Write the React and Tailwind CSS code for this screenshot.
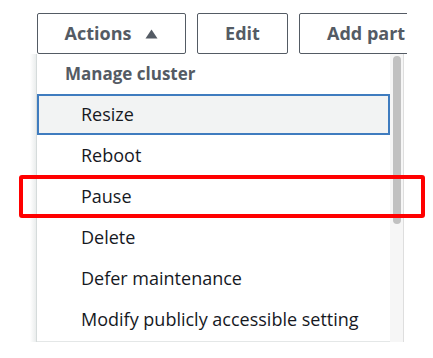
import React from "react";

const items = ["Reboot", "Pause", "Delete", "Defer maintenance", "Modify publicly accessible setting"];

const App = () => {
  return (
    <div
      className="relative w-[433px] h-[358px] overflow-hidden bg-white"
      style={{ fontFamily: '"Open Sans", "Liberation Sans", sans-serif' }}
    >
      {/* top buttons, clipped at the screenshot edge */}
      <div className="w-[407px] overflow-hidden">
        <div className="flex gap-[11px] pl-[37px] pt-[13px]">
          <button className="shrink-0 flex items-center justify-center gap-[14px] w-[149px] h-[41px] border border-[#545b64] rounded-[2px] text-[18px] font-bold text-[#545b64]">
            Actions
            <svg width="13" height="10" viewBox="0 0 13 10">
              <path d="M6.5 0.5 L12.5 9.5 L0.5 9.5 Z" fill="#545b64" />
            </svg>
          </button>
          <button className="shrink-0 w-[91px] h-[41px] border border-[#545b64] rounded-[2px] text-[18px] font-bold text-[#545b64]">
            Edit
          </button>
          <button className="shrink-0 w-[160px] h-[41px] border border-[#545b64] rounded-[2px] text-[18px] font-bold text-[#545b64] text-left pl-[27px] whitespace-nowrap">
            Add part
          </button>
        </div>
      </div>

      {/* dropdown */}
      <div className="flex ml-[30px] w-[374px] h-[288px]">
        <div className="w-[7px] bg-gradient-to-r from-white to-[#eaeded] border-r border-[#d5dbdb]" />
        <div className="flex-1 flex flex-col border-b border-[#e4e7e7]">
          <div className="h-[40px] flex items-center pl-[28px] text-[17px] font-bold text-[#545b64]">
            Manage cluster
          </div>
          <div className="h-[41px] flex items-center pl-[42px] border-2 border-[#3f7cbf] bg-[#f2f3f3] text-[18px] text-[#16191f]">
            Resize
          </div>
          {items.map((item) => (
            <div key={item} className="h-[41px] flex items-center pl-[44px] text-[18px] text-[#16191f]">
              {item}
            </div>
          ))}
        </div>
        <div className="w-[14px] bg-[#f6f6f6] border-r border-[#dedede] pt-[2px] pl-[3px]">
          <div className="w-[8px] h-[168px] rounded-full bg-[#c1c1c1]" />
        </div>
      </div>

      {/* highlight annotation */}
      <div className="absolute left-[19px] top-[175px] w-[406px] h-[43px] border-4 border-[#ff0000] rounded-[3px]" />
    </div>
  );
};

export default App;
